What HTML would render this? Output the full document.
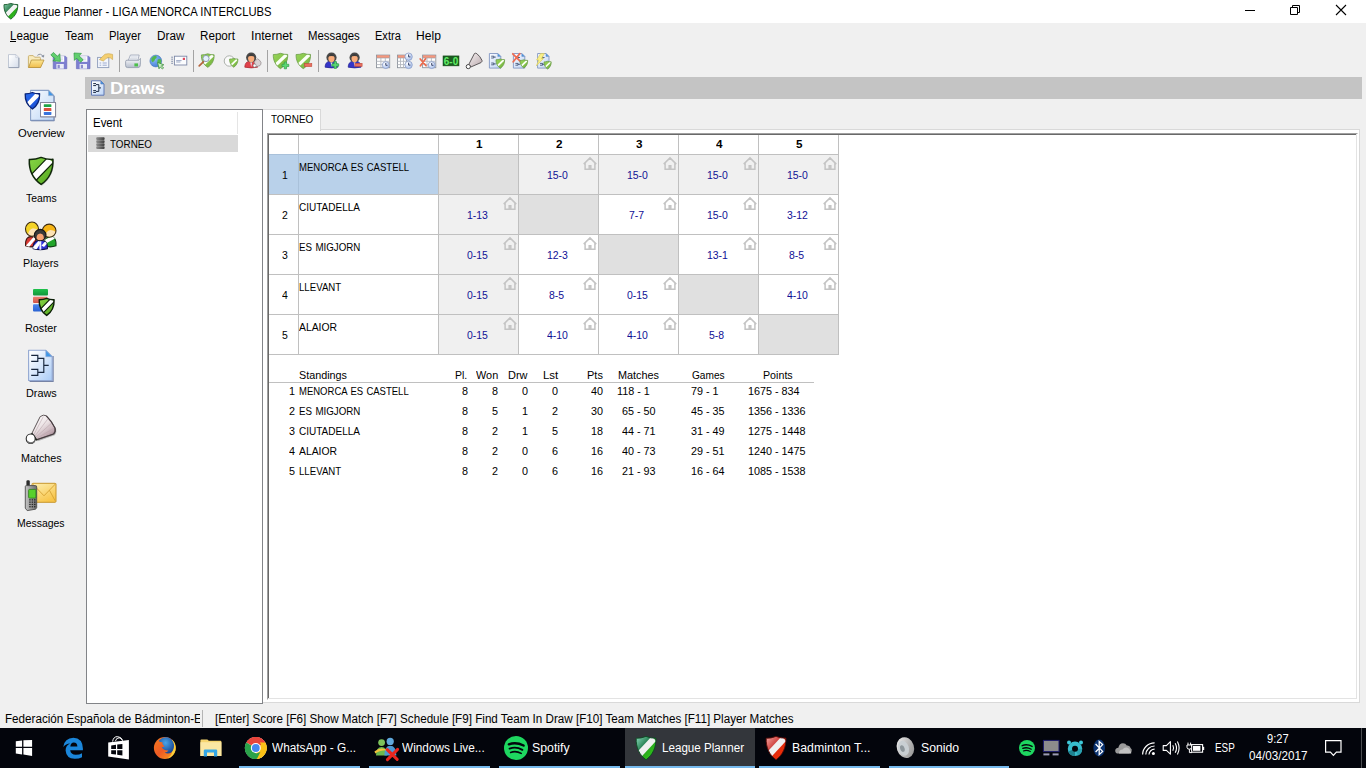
<!DOCTYPE html><html lang="en"><head><meta charset="utf-8"><title>League Planner - LIGA MENORCA INTERCLUBS</title><style>
html,body{margin:0;padding:0}
body{width:1366px;height:768px;overflow:hidden;position:relative;background:#f0f0f0;font-family:'Liberation Sans',sans-serif;}
.a{position:absolute}
.g{position:absolute;left:0;top:0;width:0;height:0}
.t{position:absolute;white-space:pre;line-height:1;transform-origin:0 0;display:inline-block;font-size:11px;color:#000}
svg{position:absolute;overflow:visible}
</style></head><body>
<header class="g titlebar">
<div class="a" style="left:0px;top:0px;width:1366px;height:23px;background:#fff;"></div>
<svg style="left:3px;top:3px" width="16" height="16" viewBox="0 0 16 16"><g transform="translate(1.0,0.4) scale(0.5714285714285714,0.5714285714285714)"><defs><clipPath id="g1c"><path d="M0,2.2 Q6,2.4 12,0 Q18,2.4 24,2 C24.5,13 20,22 12,27.5 C4,22 -0.5,13 0,2.2Z"/></clipPath><linearGradient id="g1l" x1="0" y1="0" x2="1" y2="1"><stop offset="0" stop-color="#86cfae"/><stop offset=".42" stop-color="#2a7a4a"/><stop offset=".58" stop-color="#2aa81c"/><stop offset="1" stop-color="#36d41a"/></linearGradient></defs><path d="M0,2.2 Q6,2.4 12,0 Q18,2.4 24,2 C24.5,13 20,22 12,27.5 C4,22 -0.5,13 0,2.2Z" fill="url(#g1l)"/><g clip-path="url(#g1c)"><polygon points="0.00,19.40 18.80,0.00 24.26,5.29 5.46,24.69" fill="#f4f4f4"/></g><path d="M0,2.2 Q6,2.4 12,0 Q18,2.4 24,2 C24.5,13 20,22 12,27.5 C4,22 -0.5,13 0,2.2Z" fill="none" stroke="#1a5a2c" stroke-width="1.58" stroke-linejoin="round"/></g></svg>
<span class="t" style="left:23.1px;top:6.0px;font-size:12px;transform:scaleX(0.9361)">League Planner - LIGA MENORCA INTERCLUBS</span>
<svg style="left:1244px;top:5px" width="12" height="12" viewBox="0 0 12 12"><path d="M1,5.5 H11" stroke="#000" stroke-width="1" fill="none"/></svg>
<svg style="left:1289px;top:4px" width="12" height="12" viewBox="0 0 12 12"><path d="M3.5,3.5 V1.5 H10.5 V8.5 H8.5 M1.5,3.5 H8.5 V10.5 H1.5Z" stroke="#000" stroke-width="1" fill="none"/></svg>
<svg style="left:1335px;top:4px" width="12" height="12" viewBox="0 0 12 12"><path d="M1,1 L11,11 M11,1 L1,11" stroke="#000" stroke-width="1.1" fill="none"/></svg>
</header>
<nav class="g menubar">
<span class="t" style="left:9.7px;top:30.0px;font-size:12px;transform:scaleX(0.9659)">League</span>
<span class="t" style="left:64.5px;top:30.0px;font-size:12px;transform:scaleX(0.9672)">Team</span>
<span class="t" style="left:109.3px;top:30.0px;font-size:12px;transform:scaleX(0.9372)">Player</span>
<span class="t" style="left:156.8px;top:30.0px;font-size:12px;transform:scaleX(0.9809)">Draw</span>
<span class="t" style="left:200.2px;top:30.0px;font-size:12px;transform:scaleX(0.9708)">Report</span>
<span class="t" style="left:250.9px;top:30.0px;font-size:12px;transform:scaleX(1.0191)">Internet</span>
<span class="t" style="left:308.0px;top:30.0px;font-size:12px;transform:scaleX(0.9466)">Messages</span>
<span class="t" style="left:374.8px;top:30.0px;font-size:12px;transform:scaleX(0.9202)">Extra</span>
<span class="t" style="left:416.1px;top:30.0px;font-size:12px;transform:scaleX(1.0078)">Help</span>
<div class="a" style="left:10px;top:41px;width:6px;height:1px;background:#000;"></div>
</nav>
<div class="g toolbar">
<div class="a" style="left:119px;top:50px;width:1px;height:22px;background:#a3a3a3;"></div>
<div class="a" style="left:193px;top:50px;width:1px;height:22px;background:#a3a3a3;"></div>
<div class="a" style="left:267px;top:50px;width:1px;height:22px;background:#a3a3a3;"></div>
<div class="a" style="left:318px;top:50px;width:1px;height:22px;background:#a3a3a3;"></div>
<svg style="left:0px;top:50px" width="560" height="24" viewBox="0 0 560 24"><defs><linearGradient id="g2" x1="0" y1="0" x2="1" y2="1"><stop offset="0.1" stop-color="#ffffff"/><stop offset="1" stop-color="#d3dcea"/></linearGradient></defs><path d="M8.5,4.6 H15.8 L18.8,7.6 V17.5 H8.5Z" fill="url(#g2)" stroke="#b4bccb" stroke-width="0.8" stroke-linejoin="round"/><path d="M15.8,4.6 V7.6 H18.8Z" fill="#f2f5fa" stroke="#b4bccb" stroke-width="0.48" stroke-linejoin="round"/><path d="M8.7,17.6 H18.9 V8" stroke="#8f9aae" stroke-width=".9" fill="none"/><path d="M28.4,17.4 V6.6 Q28.4,5.6 29.4,5.6 H33.2 L34.6,7.2 H39.6 Q40.4,7.2 40.4,8.2 V17.4Z" fill="#f9ebbc" stroke="#c2a45a" stroke-width=".8"/><defs><linearGradient id="fold1" x1="0" y1="0" x2="0" y2="1"><stop offset="0" stop-color="#fbe694"/><stop offset="1" stop-color="#f0bd4c"/></linearGradient></defs><path d="M28.6,17.5 L31.4,10 H44 L40.6,17.5Z" fill="url(#fold1)" stroke="#b8923c" stroke-width=".8"/><path d="M37.4,5.4 Q40.6,2.6 43,6.4" stroke="#8a92a2" stroke-width="1" fill="none"/><path d="M41.4,6.8 L44,7.4 L44.2,4.4Z" fill="#8a92a2"/><path d="M53.2,6.2 H65.4 L66.8,7.6 V18.7 H53.2Z" fill="#7d7fd0" stroke="#6466b8" stroke-width=".6"/><rect x="55.800000000000004" y="6.2" width="8.4" height="5.6" fill="#fff"/><path d="M57.2,8.0 H63.0 M57.2,9.8 H63.0" stroke="#c9c9e6" stroke-width=".8"/><rect x="56.400000000000006" y="14.0" width="7.4" height="4.7" fill="#eceef8"/><rect x="57.6" y="14.8" width="2.2" height="3.4" fill="#8a8ccc"/><path d="M50.8,5 L53.4,2.4 L57.4,6.2 L59.8,3.8 L60.4,11.4 L52.8,10.8 L55.2,8.8Z" fill="#62cf6e" stroke="#2f9a42" stroke-width=".7"/><path d="M76.4,6.2 H88.60000000000001 L90.0,7.6 V18.7 H76.4Z" fill="#7d7fd0" stroke="#6466b8" stroke-width=".6"/><rect x="79.0" y="6.2" width="8.4" height="5.6" fill="#fff"/><path d="M80.4,8.0 H86.2 M80.4,9.8 H86.2" stroke="#c9c9e6" stroke-width=".8"/><rect x="79.60000000000001" y="14.0" width="7.4" height="4.7" fill="#eceef8"/><rect x="80.80000000000001" y="14.8" width="2.2" height="3.4" fill="#8a8ccc"/><path d="M74,3 L81.4,3.4 L79,5.8 L83.2,9.8 L80.6,12.2 L76.6,8.2 L74.4,10.4Z" fill="#62cf6e" stroke="#2f9a42" stroke-width=".7"/><rect x="97.6" y="7.4" width="11.2" height="10.2" fill="#f3f6fc" stroke="#8e9cba" stroke-width=".9"/><path d="M99.6,13 H101.2 M102.6,13 H106.8 M99.6,15.2 H101.2 M102.6,15.2 H106.8" stroke="#9daace" stroke-width="1"/><path d="M99.4,9.6 L105,4.2 Q108.6,3 112.6,4.4 V9.6 L110.2,7.8 Q108,7.2 106,8.6 L103.4,11Z" fill="#f4cf72" stroke="#c9a548" stroke-width=".6"/><defs><linearGradient id="g3" x1="0" y1="0" x2="0" y2="1"><stop offset="0" stop-color="#fdfdfe"/><stop offset="1" stop-color="#b4bccb"/></linearGradient></defs><path d="M128.2,10.6 L130.4,5 H139.2 L137.8,10.6Z" fill="#f4f6fa" stroke="#9aa2b4" stroke-width=".8"/><path d="M130.6,7 H137.6 M130,8.8 H137" stroke="#c4cad6" stroke-width=".7"/><path d="M125.6,11.6 Q125.6,10.2 127,10.2 H139 Q140.4,9 140.4,8.4 V14.6 Q140.4,17.6 138,17.6 H127.6 Q125.6,17.6 125.6,15.6Z" fill="url(#g3)" stroke="#8f98aa" stroke-width=".8"/><rect x="134.4" y="13.4" width="3.6" height="3" fill="#4cc04a"/><defs><radialGradient id="g4" cx=".35" cy=".3" r=".8"><stop offset="0" stop-color="#8ec0f6"/><stop offset="1" stop-color="#3f78d6"/></radialGradient></defs><circle cx="155.8" cy="11" r="5.9" fill="url(#g4)" stroke="#4a78b8" stroke-width=".6"/><path d="M151.2,8.4 Q153,5.6 156.4,5.4 Q157.4,7.6 155.2,9 Q154.6,11.6 152.6,12.2 Q151,10.6 151.2,8.4Z M157.8,9.4 Q160.2,8.4 161.4,10.2 Q161.4,14 158.6,15.6 Q156.6,13.2 157.8,9.4Z" fill="#52b84e"/><path d="M157.6,12.4 L163.8,14.8 L161.4,15.8 L163.6,18 L162.4,19 L160.2,16.8 L159,18.8Z" fill="#c9f2c4" stroke="#3b8c3a" stroke-width=".8"/><rect x="174.4" y="6.2" width="12.4" height="8.8" fill="#fbfcfe" stroke="#7c88a6" stroke-width=".9"/><rect x="182.8" y="7.8" width="2.2" height="2.2" fill="#e0475a"/><path d="M176.2,10.6 H181.6 M176.2,12 H180.4" stroke="#93a0c0" stroke-width=".9"/><path d="M171.2,7.2 H173 M171.2,9.2 H173 M171.2,11.3 H173 M171.2,13.3 H173" stroke="#7c88a6" stroke-width=".9"/><g transform="translate(201.4,3.8) scale(0.53,0.49290000000000006)"><defs><clipPath id="g5c"><path d="M0,2.2 Q6,2.4 12,0 Q18,2.4 24,2 C24.5,13 20,22 12,27.5 C4,22 -0.5,13 0,2.2Z"/></clipPath><linearGradient id="g5l" x1="0" y1="0" x2="1" y2="1"><stop offset="0" stop-color="#98d658"/><stop offset="1" stop-color="#74b23e"/></linearGradient></defs><path d="M0,2.2 Q6,2.4 12,0 Q18,2.4 24,2 C24.5,13 20,22 12,27.5 C4,22 -0.5,13 0,2.2Z" fill="url(#g5l)"/><g clip-path="url(#g5c)"><polygon points="0.86,20.24 19.66,0.84 23.68,4.73 4.88,24.13" fill="#fbfff6"/></g><path d="M0,2.2 Q6,2.4 12,0 Q18,2.4 24,2 C24.5,13 20,22 12,27.5 C4,22 -0.5,13 0,2.2Z" fill="none" stroke="#6a9a48" stroke-width="1.51" stroke-linejoin="round"/></g><path d="M203.6,11.6 L199.2,15.8" stroke="#b5643c" stroke-width="1.7" stroke-linecap="round"/><circle cx="206" cy="8.5" r="3.1" fill="#e4f0fc" stroke="#8e9cb0" stroke-width="1"/><circle cx="229.4" cy="11" r="5.2" fill="#fafafa" stroke="#a4a8a4" stroke-width=".9"/><g transform="translate(229.6,8.4) scale(0.345,0.32084999999999997)"><defs><clipPath id="g6c"><path d="M0,2.2 Q6,2.4 12,0 Q18,2.4 24,2 C24.5,13 20,22 12,27.5 C4,22 -0.5,13 0,2.2Z"/></clipPath><linearGradient id="g6l" x1="0" y1="0" x2="1" y2="1"><stop offset="0" stop-color="#98d658"/><stop offset="1" stop-color="#74b23e"/></linearGradient></defs><path d="M0,2.2 Q6,2.4 12,0 Q18,2.4 24,2 C24.5,13 20,22 12,27.5 C4,22 -0.5,13 0,2.2Z" fill="url(#g6l)"/><g clip-path="url(#g6c)"><polygon points="0.86,20.24 19.66,0.84 23.68,4.73 4.88,24.13" fill="#fbfff6"/></g><path d="M0,2.2 Q6,2.4 12,0 Q18,2.4 24,2 C24.5,13 20,22 12,27.5 C4,22 -0.5,13 0,2.2Z" fill="none" stroke="#6a9a48" stroke-width="2.32" stroke-linejoin="round"/></g><path d="M244.79999999999998,17.2 Q244.79999999999998,12.0 249.2,11.2 H253.2 Q257.59999999999997,12.0 257.59999999999997,17.2 Q251.2,18.6 244.79999999999998,17.2Z" fill="#e0414a" stroke="#a8242c" stroke-width=".7"/><path d="M250.2,11.6 L251.2,17.1 L252.2,11.6Z" fill="#e8e8f4"/><circle cx="251.2" cy="7.5" r="5.1" fill="#4a4a4a"/><ellipse cx="251.2" cy="8.6" rx="3.1" ry="3.7" fill="#f9ad7c"/><path d="M246.79999999999998,7.0 Q251.2,1.0 255.6,7.0 Q251.2,4.800000000000001 246.79999999999998,7.0Z" fill="#3c3c3c"/><path d="M254,12 L257.6,8.8 Q259.6,9.6 261,12.4 Q261.2,14.4 260,15.6 L256,16.8Z" fill="#d9d2d4" stroke="#8e8688" stroke-width=".7"/><circle cx="254.6" cy="15.6" r="1.6" fill="#fff" stroke="#777" stroke-width=".6"/><g transform="translate(273.3,3.3) scale(0.6,0.558)"><defs><clipPath id="g8c"><path d="M0,2.2 Q6,2.4 12,0 Q18,2.4 24,2 C24.5,13 20,22 12,27.5 C4,22 -0.5,13 0,2.2Z"/></clipPath><linearGradient id="g8l" x1="0" y1="0" x2="1" y2="1"><stop offset="0" stop-color="#98d658"/><stop offset="1" stop-color="#74b23e"/></linearGradient></defs><path d="M0,2.2 Q6,2.4 12,0 Q18,2.4 24,2 C24.5,13 20,22 12,27.5 C4,22 -0.5,13 0,2.2Z" fill="url(#g8l)"/><g clip-path="url(#g8c)"><polygon points="0.86,20.24 19.66,0.84 23.68,4.73 4.88,24.13" fill="#fbfff6"/></g><path d="M0,2.2 Q6,2.4 12,0 Q18,2.4 24,2 C24.5,13 20,22 12,27.5 C4,22 -0.5,13 0,2.2Z" fill="none" stroke="#6a9a48" stroke-width="1.33" stroke-linejoin="round"/></g><path d="M284.26666666666665,12 H286.53333333333336 V14.266666666666666 H288.8 V16.53333333333333 H286.53333333333336 V18.8 H284.26666666666665 V16.53333333333333 H282 V14.266666666666666 H284.26666666666665Z" fill="#5bd873" stroke="#2f9e48" stroke-width=".7"/><g transform="translate(296.1,3.3) scale(0.6,0.558)"><defs><clipPath id="g9c"><path d="M0,2.2 Q6,2.4 12,0 Q18,2.4 24,2 C24.5,13 20,22 12,27.5 C4,22 -0.5,13 0,2.2Z"/></clipPath><linearGradient id="g9l" x1="0" y1="0" x2="1" y2="1"><stop offset="0" stop-color="#98d658"/><stop offset="1" stop-color="#74b23e"/></linearGradient></defs><path d="M0,2.2 Q6,2.4 12,0 Q18,2.4 24,2 C24.5,13 20,22 12,27.5 C4,22 -0.5,13 0,2.2Z" fill="url(#g9l)"/><g clip-path="url(#g9c)"><polygon points="0.86,20.24 19.66,0.84 23.68,4.73 4.88,24.13" fill="#fbfff6"/></g><path d="M0,2.2 Q6,2.4 12,0 Q18,2.4 24,2 C24.5,13 20,22 12,27.5 C4,22 -0.5,13 0,2.2Z" fill="none" stroke="#6a9a48" stroke-width="1.33" stroke-linejoin="round"/></g><rect x="304.6" y="13.6" width="7.2" height="2.9" fill="#e8705e" stroke="#c24a3a" stroke-width=".6"/><path d="M325.1,17.2 Q325.1,12.0 329.5,11.2 H333.5 Q337.9,12.0 337.9,17.2 Q331.5,18.6 325.1,17.2Z" fill="#3535c8" stroke="#1d1d8e" stroke-width=".7"/><path d="M330.5,11.6 L331.5,17.1 L332.5,11.6Z" fill="#e8e8f4"/><circle cx="331.5" cy="7.5" r="5.1" fill="#4a4a4a"/><ellipse cx="331.5" cy="8.6" rx="3.1" ry="3.7" fill="#f9ad7c"/><path d="M327.1,7.0 Q331.5,1.0 335.9,7.0 Q331.5,4.800000000000001 327.1,7.0Z" fill="#3c3c3c"/><path d="M334.16666666666663,11.6 H336.43333333333334 V13.866666666666667 H338.7 V16.133333333333333 H336.43333333333334 V18.4 H334.16666666666663 V16.133333333333333 H331.9 V13.866666666666667 H334.16666666666663Z" fill="#5bd873" stroke="#2f9e48" stroke-width=".7"/><path d="M348.20000000000005,17.2 Q348.20000000000005,12.0 352.6,11.2 H356.6 Q361.0,12.0 361.0,17.2 Q354.6,18.6 348.20000000000005,17.2Z" fill="#3535c8" stroke="#1d1d8e" stroke-width=".7"/><path d="M353.6,11.6 L354.6,17.1 L355.6,11.6Z" fill="#e8e8f4"/><circle cx="354.6" cy="7.5" r="5.1" fill="#4a4a4a"/><ellipse cx="354.6" cy="8.6" rx="3.1" ry="3.7" fill="#f9ad7c"/><path d="M350.20000000000005,7.0 Q354.6,1.0 359.0,7.0 Q354.6,4.800000000000001 350.20000000000005,7.0Z" fill="#3c3c3c"/><rect x="354.9" y="13.4" width="7.2" height="2.9" fill="#e8705e" stroke="#c24a3a" stroke-width=".6"/><rect x="376.5" y="5.1" width="13.2" height="12.6" fill="#fff" stroke="#8d939c" stroke-width=".9"/><rect x="376.9" y="5.5" width="12.399999999999999" height="2.4" fill="#f0714e"/><path d="M377.1,6.5 H389.09999999999997" stroke="#f8b49c" stroke-width=".6"/><path d="M380.9,7.8999999999999995 V17.7" stroke="#b4b8c0" stroke-width=".9"/><path d="M385.3,7.8999999999999995 V17.7" stroke="#b4b8c0" stroke-width=".9"/><path d="M376.5,8.0 H389.7" stroke="#b4b8c0" stroke-width=".9"/><path d="M376.5,11.3 H389.7" stroke="#b4b8c0" stroke-width=".9"/><path d="M376.5,14.6 H389.7" stroke="#b4b8c0" stroke-width=".9"/><defs><radialGradient id="g12" cx=".35" cy=".3" r=".8"><stop offset="0" stop-color="#fff"/><stop offset="1" stop-color="#9db7ea"/></radialGradient></defs><circle cx="385.8" cy="15.1" r="3.5" fill="url(#g12)" stroke="#8ea0c8" stroke-width=".8"/><path d="M385.8,13.0 V15.299999999999999 H387.55" stroke="#27345c" stroke-width=".9" fill="none"/><rect x="397.5" y="5.1" width="9" height="12.6" fill="#fff" stroke="#8d939c" stroke-width=".9"/><rect x="397.9" y="5.5" width="8.2" height="2.4" fill="#f0714e"/><path d="M398.1,6.5 H405.9" stroke="#f8b49c" stroke-width=".6"/><path d="M400.5,7.8999999999999995 V17.7" stroke="#b4b8c0" stroke-width=".9"/><path d="M403.5,7.8999999999999995 V17.7" stroke="#b4b8c0" stroke-width=".9"/><path d="M397.5,8.0 H406.5" stroke="#b4b8c0" stroke-width=".9"/><path d="M397.5,11.3 H406.5" stroke="#b4b8c0" stroke-width=".9"/><path d="M397.5,14.6 H406.5" stroke="#b4b8c0" stroke-width=".9"/><defs><radialGradient id="g13" cx=".35" cy=".3" r=".8"><stop offset="0" stop-color="#fff"/><stop offset="1" stop-color="#9db7ea"/></radialGradient></defs><circle cx="408.6" cy="6.7" r="3.7" fill="url(#g13)" stroke="#8ea0c8" stroke-width=".8"/><path d="M408.6,4.48 V6.9 H410.45000000000005" stroke="#27345c" stroke-width=".9" fill="none"/><defs><radialGradient id="g14" cx=".35" cy=".3" r=".8"><stop offset="0" stop-color="#fff"/><stop offset="1" stop-color="#9db7ea"/></radialGradient></defs><circle cx="408.6" cy="14.9" r="3.7" fill="url(#g14)" stroke="#8ea0c8" stroke-width=".8"/><path d="M408.6,12.68 V15.1 H410.45000000000005" stroke="#27345c" stroke-width=".9" fill="none"/><rect x="422.6" y="5.1" width="13.2" height="12.6" fill="#fff" stroke="#8d939c" stroke-width=".9"/><rect x="423.0" y="5.5" width="12.399999999999999" height="2.4" fill="#f0714e"/><path d="M423.20000000000005,6.5 H435.2" stroke="#f8b49c" stroke-width=".6"/><path d="M427.0,7.8999999999999995 V17.7" stroke="#b4b8c0" stroke-width=".9"/><path d="M431.40000000000003,7.8999999999999995 V17.7" stroke="#b4b8c0" stroke-width=".9"/><path d="M422.6,8.0 H435.8" stroke="#b4b8c0" stroke-width=".9"/><path d="M422.6,11.3 H435.8" stroke="#b4b8c0" stroke-width=".9"/><path d="M422.6,14.6 H435.8" stroke="#b4b8c0" stroke-width=".9"/><defs><radialGradient id="g15" cx=".35" cy=".3" r=".8"><stop offset="0" stop-color="#fff"/><stop offset="1" stop-color="#9db7ea"/></radialGradient></defs><circle cx="431.7" cy="15.1" r="3.5" fill="url(#g15)" stroke="#8ea0c8" stroke-width=".8"/><path d="M431.7,13.0 V15.299999999999999 H433.45" stroke="#27345c" stroke-width=".9" fill="none"/><path d="M420.2,9 L426,15.6 M425.6,8.8 L420.4,15.8" stroke="#ec6a4c" stroke-width="1.7" stroke-linecap="round"/><rect x="443" y="5.9" width="16" height="10" fill="#1c5c20" stroke="#174a1a" stroke-width=".5"/><text x="451" y="14.6" text-anchor="middle" font-family="'Liberation Sans',sans-serif" font-weight="700" font-size="10.5" textLength="14.4" lengthAdjust="spacingAndGlyphs" fill="#63ee68">6-0</text><defs><linearGradient id="g16" x1="0" y1="0" x2="1" y2="1"><stop offset="0" stop-color="#f6f2f2"/><stop offset="1" stop-color="#b9a8ac"/></linearGradient></defs><path d="M468.8,14.4 L474.4,3.6 Q475.6,2.8 476.8,3.6 Q480.4,6.6 482,10.4 Q482.2,12 481,12.6 L470.8,17Z" fill="url(#g16)" stroke="#4e4a4c" stroke-width=".9"/><circle cx="468.3" cy="16.6" r="2.1" fill="#fff" stroke="#333" stroke-width=".9"/><defs><linearGradient id="g17" x1="0" y1="0" x2="1" y2="1"><stop offset="0.1" stop-color="#f7faff"/><stop offset="1" stop-color="#b9d0f4"/></linearGradient></defs><path d="M489.4,3.5 H497.79999999999995 L500.79999999999995,6.5 V18.1 H489.4Z" fill="url(#g17)" stroke="#8196c2" stroke-width="0.9" stroke-linejoin="round"/><path d="M497.79999999999995,3.5 V6.5 H500.79999999999995Z" fill="#3f97e6" stroke="#8196c2" stroke-width="0.54" stroke-linejoin="round"/><path d="M491.2,6.2 H493.8 V8.0 H491.2 M493.8,7.1000000000000005 H495.8 M491.2,13.0 H493.8 V14.8 H491.2 M493.8,13.9 H495.8" stroke="#34466a" stroke-width=".8" fill="none"/><g transform="translate(496,9) scale(0.36,0.3348)"><defs><clipPath id="g18c"><path d="M0,2.2 Q6,2.4 12,0 Q18,2.4 24,2 C24.5,13 20,22 12,27.5 C4,22 -0.5,13 0,2.2Z"/></clipPath><linearGradient id="g18l" x1="0" y1="0" x2="1" y2="1"><stop offset="0" stop-color="#98d658"/><stop offset="1" stop-color="#74b23e"/></linearGradient></defs><path d="M0,2.2 Q6,2.4 12,0 Q18,2.4 24,2 C24.5,13 20,22 12,27.5 C4,22 -0.5,13 0,2.2Z" fill="url(#g18l)"/><g clip-path="url(#g18c)"><polygon points="0.86,20.24 19.66,0.84 23.68,4.73 4.88,24.13" fill="#fbfff6"/></g><path d="M0,2.2 Q6,2.4 12,0 Q18,2.4 24,2 C24.5,13 20,22 12,27.5 C4,22 -0.5,13 0,2.2Z" fill="none" stroke="#6a9a48" stroke-width="2.22" stroke-linejoin="round"/></g><defs><linearGradient id="g19" x1="0" y1="0" x2="1" y2="1"><stop offset="0.1" stop-color="#f7faff"/><stop offset="1" stop-color="#b9d0f4"/></linearGradient></defs><path d="M513.4,3.5 H521.8 L524.8,6.5 V18.1 H513.4Z" fill="url(#g19)" stroke="#8196c2" stroke-width="0.9" stroke-linejoin="round"/><path d="M521.8,3.5 V6.5 H524.8Z" fill="#3f97e6" stroke="#8196c2" stroke-width="0.54" stroke-linejoin="round"/><path d="M515.4,6.6 H518.0 V8.4 H515.4 M518.0,7.5 H520.0 M515.4,13.399999999999999 H518.0 V15.2 H515.4 M518.0,14.3 H520.0" stroke="#34466a" stroke-width=".8" fill="none"/><path d="M512.8,3.8 L520.6,11.6 M519.8,3.6 L513.2,11.8" stroke="#ee6c52" stroke-width="1.8" stroke-linecap="round"/><g transform="translate(520,9.8) scale(0.32,0.29760000000000003)"><defs><clipPath id="g20c"><path d="M0,2.2 Q6,2.4 12,0 Q18,2.4 24,2 C24.5,13 20,22 12,27.5 C4,22 -0.5,13 0,2.2Z"/></clipPath><linearGradient id="g20l" x1="0" y1="0" x2="1" y2="1"><stop offset="0" stop-color="#98d658"/><stop offset="1" stop-color="#74b23e"/></linearGradient></defs><path d="M0,2.2 Q6,2.4 12,0 Q18,2.4 24,2 C24.5,13 20,22 12,27.5 C4,22 -0.5,13 0,2.2Z" fill="url(#g20l)"/><g clip-path="url(#g20c)"><polygon points="0.86,20.24 19.66,0.84 23.68,4.73 4.88,24.13" fill="#fbfff6"/></g><path d="M0,2.2 Q6,2.4 12,0 Q18,2.4 24,2 C24.5,13 20,22 12,27.5 C4,22 -0.5,13 0,2.2Z" fill="none" stroke="#6a9a48" stroke-width="2.50" stroke-linejoin="round"/></g><defs><linearGradient id="g21" x1="0" y1="0" x2="1" y2="1"><stop offset="0.1" stop-color="#f7faff"/><stop offset="1" stop-color="#b9d0f4"/></linearGradient></defs><path d="M537.6,3.5 H546.0 L549.0,6.5 V18.1 H537.6Z" fill="url(#g21)" stroke="#8196c2" stroke-width="0.9" stroke-linejoin="round"/><path d="M546.0,3.5 V6.5 H549.0Z" fill="#3f97e6" stroke="#8196c2" stroke-width="0.54" stroke-linejoin="round"/><path d="M540,6.6 H542.6 V8.4 H540 M542.6,7.5 H544.6 M540,13.399999999999999 H542.6 V15.2 H540 M542.6,14.3 H544.6" stroke="#34466a" stroke-width=".8" fill="none"/><path d="M540.6,3.6 H544.4 L541.6,8.4 H543.6 L536.4,15.8 L538.8,10 H536.6Z" fill="#f8f08a" stroke="#d8c850" stroke-width=".6"/><g transform="translate(544,11.3) scale(0.3,0.279)"><defs><clipPath id="g22c"><path d="M0,2.2 Q6,2.4 12,0 Q18,2.4 24,2 C24.5,13 20,22 12,27.5 C4,22 -0.5,13 0,2.2Z"/></clipPath><linearGradient id="g22l" x1="0" y1="0" x2="1" y2="1"><stop offset="0" stop-color="#98d658"/><stop offset="1" stop-color="#74b23e"/></linearGradient></defs><path d="M0,2.2 Q6,2.4 12,0 Q18,2.4 24,2 C24.5,13 20,22 12,27.5 C4,22 -0.5,13 0,2.2Z" fill="url(#g22l)"/><g clip-path="url(#g22c)"><polygon points="0.86,20.24 19.66,0.84 23.68,4.73 4.88,24.13" fill="#fbfff6"/></g><path d="M0,2.2 Q6,2.4 12,0 Q18,2.4 24,2 C24.5,13 20,22 12,27.5 C4,22 -0.5,13 0,2.2Z" fill="none" stroke="#6a9a48" stroke-width="2.67" stroke-linejoin="round"/></g></svg>
</div>
<aside class="g sidebar">
<svg style="left:20px;top:85px" width="42" height="42" viewBox="0 0 42 42"><defs><linearGradient id="g23" x1="0" y1="0" x2="1" y2="1"><stop offset="0.1" stop-color="#f4f8fe"/><stop offset="1" stop-color="#bcd6f6"/></linearGradient></defs><path d="M10.6,5.4 H28.599999999999998 L33.8,10.600000000000001 V35.4 H10.6Z" fill="url(#g23)" stroke="#8aa0c6" stroke-width="1.1" stroke-linejoin="round"/><path d="M28.599999999999998,5.4 V10.600000000000001 H33.8Z" fill="#3f97e6" stroke="#8aa0c6" stroke-width="0.66" stroke-linejoin="round"/><path d="M11.2,35.9 H34.3 V11" stroke="#6d7fa6" stroke-width="1" fill="none" opacity=".7"/><rect x="21" y="18" width="15.2" height="14.6" fill="#9a9aa8" opacity=".55"/><rect x="20.5" y="17.5" width="15" height="14.3" fill="#fff" stroke="#85879a" stroke-width="1"/><rect x="23.8" y="19.2" width="7.6" height="2.9" rx=".6" fill="#1fa548"/><rect x="23.8" y="23.1" width="7.6" height="2.9" rx=".6" fill="#d8533c"/><rect x="23.8" y="27" width="7.6" height="2.9" rx=".6" fill="#3a74dc"/><g transform="translate(5.2,7.5) scale(0.6,0.6)"><defs><clipPath id="g24c"><path d="M0,2.2 Q6,2.4 12,0 Q18,2.4 24,2 C24.5,13 20,22 12,27.5 C4,22 -0.5,13 0,2.2Z"/></clipPath><linearGradient id="g24l" x1="0" y1="0" x2="1" y2="1"><stop offset="0" stop-color="#2b6df0"/><stop offset="1" stop-color="#164bd0"/></linearGradient></defs><path d="M0,2.2 Q6,2.4 12,0 Q18,2.4 24,2 C24.5,13 20,22 12,27.5 C4,22 -0.5,13 0,2.2Z" fill="url(#g24l)"/><g clip-path="url(#g24c)"><polygon points="0.00,19.40 18.80,0.00 24.26,5.29 5.46,24.69" fill="#fff"/></g><path d="M0,2.2 Q6,2.4 12,0 Q18,2.4 24,2 C24.5,13 20,22 12,27.5 C4,22 -0.5,13 0,2.2Z" fill="none" stroke="#0a2476" stroke-width="2.17" stroke-linejoin="round"/></g></svg>
<svg style="left:20px;top:150px" width="42" height="42" viewBox="0 0 42 42"><path d="M10.3,10.6 Q16,10.8 22,8.4 Q28,10.8 33.8,10.3 C34.5,21 30,30 22,35.7 C14,30 9.5,21 10.3,10.6Z" fill="#000" opacity=".18"/><g transform="translate(9.3,7.4) scale(0.985,0.985)"><defs><clipPath id="g25c"><path d="M0,2.2 Q6,2.4 12,0 Q18,2.4 24,2 C24.5,13 20,22 12,27.5 C4,22 -0.5,13 0,2.2Z"/></clipPath><linearGradient id="g25l" x1="0" y1="0" x2="1" y2="1"><stop offset="0" stop-color="#86d545"/><stop offset="1" stop-color="#55a81f"/></linearGradient></defs><path d="M0,2.2 Q6,2.4 12,0 Q18,2.4 24,2 C24.5,13 20,22 12,27.5 C4,22 -0.5,13 0,2.2Z" fill="url(#g25l)"/><g clip-path="url(#g25c)"><polygon points="0.00,19.40 18.80,0.00 24.26,5.29 5.46,24.69" fill="#fff"/><path d="M0.00,19.40 L18.80,0.00 M24.26,5.29 L5.46,24.69" stroke="#10280a" stroke-width="1.22" fill="none"/></g><path d="M0,2.2 Q6,2.4 12,0 Q18,2.4 24,2 C24.5,13 20,22 12,27.5 C4,22 -0.5,13 0,2.2Z" fill="none" stroke="#10280a" stroke-width="1.52" stroke-linejoin="round"/></g></svg>
<svg style="left:20px;top:215px" width="42" height="42" viewBox="0 0 42 42"><defs><clipPath id="g26"><path d="M5.6,30.8 C5.1,23.6 7.779999999999999,21.6 11.05,21.6 C14.32,21.6 17.0,23.6 16.5,30.8 Q11.05,33.0 5.6,30.8Z"/></clipPath></defs><path d="M5.6,30.8 C5.1,23.6 7.779999999999999,21.6 11.05,21.6 C14.32,21.6 17.0,23.6 16.5,30.8 Q11.05,33.0 5.6,30.8Z" fill="#d83a34" stroke="#3a1410" stroke-width="1.1"/><g clip-path="url(#g26)"><polygon points="6,30.5 13.6,22 15.6,24 8.6,32.6" fill="#fff"/></g><defs><clipPath id="g27"><path d="M24.5,30.8 C24.0,23.6 26.8,21.6 30.25,21.6 C33.7,21.6 36.5,23.6 36,30.8 Q30.25,33.0 24.5,30.8Z"/></clipPath></defs><path d="M24.5,30.8 C24.0,23.6 26.8,21.6 30.25,21.6 C33.7,21.6 36.5,23.6 36,30.8 Q30.25,33.0 24.5,30.8Z" fill="#22a52a" stroke="#0c3a10" stroke-width="1.1"/><g clip-path="url(#g27)"><polygon points="25,24.5 33,21 35,23.5 26,28.5" fill="#fff"/></g><defs><clipPath id="g29"><ellipse cx="12" cy="14.1" rx="6.5" ry="7.1"/></clipPath></defs><ellipse cx="12" cy="14.1" rx="6.5" ry="7.1" fill="#fce2b4"/><g clip-path="url(#g29)"><path d="M4.5,6.0 H19.5 V16.585 Q16.875,13.39 12.975,13.248 Q9.075,14.241999999999999 7.97,19.424999999999997 H4.5Z" fill="#f4d326"/></g><ellipse cx="12" cy="14.1" rx="6.5" ry="7.1" fill="none" stroke="#3d2c12" stroke-width="1.1"/><defs><clipPath id="g30"><ellipse cx="29.2" cy="15.7" rx="6.8" ry="6.6"/></clipPath></defs><ellipse cx="29.2" cy="15.7" rx="6.8" ry="6.6" fill="#fce2b4"/><g clip-path="url(#g30)"><path d="M21.4,8.1 H37.0 V18.009999999999998 Q34.3,15.04 30.22,14.908 Q26.14,15.831999999999999 24.983999999999998,20.65 H21.4Z" fill="#f6b414"/></g><ellipse cx="29.2" cy="15.7" rx="6.8" ry="6.6" fill="none" stroke="#3d2c12" stroke-width="1.1"/><defs><clipPath id="g28"><path d="M13.2,33.6 C12.7,27.2 16.04,25.2 20.299999999999997,25.2 C24.56,25.2 27.9,27.2 27.4,33.6 Q20.299999999999997,35.800000000000004 13.2,33.6Z"/></clipPath></defs><path d="M13.2,33.6 C12.7,27.2 16.04,25.2 20.299999999999997,25.2 C24.56,25.2 27.9,27.2 27.4,33.6 Q20.299999999999997,35.800000000000004 13.2,33.6Z" fill="#2f35d8" stroke="#10124a" stroke-width="1.1"/><g clip-path="url(#g28)"><polygon points="12,33 18.5,26 21,27.5 15.5,36" fill="#fff"/><polygon points="19.4,25 21.3,25 21.3,36 19.4,36" fill="#e8ecff"/><polygon points="21.5,30.5 26,25.6 28,27.5 24,32" fill="#fff"/></g><defs><clipPath id="g31"><ellipse cx="20.2" cy="20.1" rx="5.8" ry="5.7"/></clipPath></defs><ellipse cx="20.2" cy="20.1" rx="5.8" ry="5.7" fill="#f7a171"/><g clip-path="url(#g31)"><path d="M13.399999999999999,13.400000000000002 H27.0 V24.375 H23.796 Q24.259999999999998,18.675 20.2,18.39 Q16.14,18.675 16.604,24.375 H13.399999999999999Z" fill="#3a3a3a"/></g><ellipse cx="20.2" cy="20.1" rx="5.8" ry="5.7" fill="none" stroke="#161616" stroke-width="1.1"/></svg>
<svg style="left:20px;top:280px" width="42" height="42" viewBox="0 0 42 42"><defs><linearGradient id="g32" x1="0" y1="0" x2="0" y2="1"><stop offset="0" stop-color="#1fc24c"/><stop offset="1" stop-color="#12963a"/></linearGradient></defs><rect x="13" y="9" width="15" height="6.4" rx="1" fill="url(#g32)"/><defs><linearGradient id="g33" x1="0" y1="0" x2="0" y2="1"><stop offset="0" stop-color="#ec7f70"/><stop offset="1" stop-color="#cf5446"/></linearGradient></defs><rect x="13" y="16.7" width="14.6" height="6.4" rx="1" fill="url(#g33)"/><defs><linearGradient id="g34" x1="0" y1="0" x2="0" y2="1"><stop offset="0" stop-color="#4a86ee"/><stop offset="1" stop-color="#2a62d2"/></linearGradient></defs><rect x="13" y="24.3" width="10.5" height="7.2" rx="1" fill="url(#g34)"/><path d="M20.2,20 Q23.5,20.2 27,18.8 Q30.5,20.2 34.5,19.9 C35,26 32,32 27.6,36 C22,32 19.5,26 20.2,20Z" fill="#000" opacity=".2"/><g transform="translate(19.2,18.4) scale(0.62,0.62)"><defs><clipPath id="g35c"><path d="M0,2.2 Q6,2.4 12,0 Q18,2.4 24,2 C24.5,13 20,22 12,27.5 C4,22 -0.5,13 0,2.2Z"/></clipPath><linearGradient id="g35l" x1="0" y1="0" x2="1" y2="1"><stop offset="0" stop-color="#86d545"/><stop offset="1" stop-color="#55a81f"/></linearGradient></defs><path d="M0,2.2 Q6,2.4 12,0 Q18,2.4 24,2 C24.5,13 20,22 12,27.5 C4,22 -0.5,13 0,2.2Z" fill="url(#g35l)"/><g clip-path="url(#g35c)"><polygon points="0.00,19.40 18.80,0.00 24.26,5.29 5.46,24.69" fill="#fff"/><path d="M0.00,19.40 L18.80,0.00 M24.26,5.29 L5.46,24.69" stroke="#0c1f08" stroke-width="1.81" fill="none"/></g><path d="M0,2.2 Q6,2.4 12,0 Q18,2.4 24,2 C24.5,13 20,22 12,27.5 C4,22 -0.5,13 0,2.2Z" fill="none" stroke="#0c1f08" stroke-width="2.26" stroke-linejoin="round"/></g></svg>
<svg style="left:20px;top:345px" width="42" height="42" viewBox="0 0 42 42"><path d="M9.6,36.2 H33 V11" stroke="#4e5f8c" stroke-width="1.4" fill="none" opacity=".75"/><defs><linearGradient id="g36" x1="0" y1="0" x2="1" y2="1"><stop offset="0.1" stop-color="#fdfeff"/><stop offset="1" stop-color="#a9cbf6"/></linearGradient></defs><path d="M8.6,5.3 H25.800000000000004 L32.2,11.7 V35.5 H8.6Z" fill="url(#g36)" stroke="#93a8d2" stroke-width="1.1" stroke-linejoin="round"/><path d="M25.800000000000004,5.3 V11.7 H32.2Z" fill="#3f97e6" stroke="#93a8d2" stroke-width="0.66" stroke-linejoin="round"/><path d="M11.2,10.4 H17.8 V16.4 H11.2 M17.8,13.4 H23.8 V27.3 H17.8 M23.8,20.3 H28.7 M11.2,24.3 H17.8 V30.3 H11.2" stroke="#18273d" stroke-width="1.15" fill="none"/></svg>
<svg style="left:20px;top:410px" width="42" height="42" viewBox="0 0 42 42"><defs><linearGradient id="g37" x1="0.2" y1="0" x2="0.9" y2="1"><stop offset="0" stop-color="#ffffff"/><stop offset="0.4" stop-color="#ece3e5"/><stop offset="0.72" stop-color="#c5aeb6"/><stop offset="1" stop-color="#8c727d"/></linearGradient></defs><path d="M12.6,24.4 L20.6,6.8 Q23.8,4.2 26.6,6 Q32,11.5 35.2,18.4 Q36.2,22.2 33.8,24.4 L17,30.4Z" fill="#000" opacity=".25" transform="translate(.8,.9)"/><path d="M11.8,23.5 L20.2,6.6 Q23.4,4.2 26.2,5.7 Q31.6,11 35,18 Q36,21.8 33.6,24 L16.4,29.8Z" fill="url(#g37)" stroke="#5e5658" stroke-width="1"/><path d="M13.6,25 L23.4,6.5 M14.6,26.4 L27.8,9 M15.4,27.6 L31.6,13.2 M16,28.8 L34,18.2" stroke="#b8a3aa" stroke-width=".8" fill="none" opacity=".7"/><path d="M26.2,5.7 Q31.6,11 35,18 Q36,21.8 33.6,24 L16.4,29.8" stroke="#3c3236" stroke-width="1.3" fill="none" opacity=".75"/><path d="M11.6,23.2 L16.8,30.2" stroke="#1c241c" stroke-width="1.6"/><ellipse cx="10.7" cy="28.7" rx="4.5" ry="4.7" fill="#fff" stroke="#2a2a2a" stroke-width="1.1"/><path d="M6.8,31 Q10.5,35 14.6,31.2" stroke="#6e6e6e" stroke-width="1.5" fill="none"/></svg>
<svg style="left:20px;top:475px" width="42" height="42" viewBox="0 0 42 42"><defs><linearGradient id="g38" x1="0" y1="0" x2="0.6" y2="1"><stop offset="0" stop-color="#fdf0b4"/><stop offset="1" stop-color="#f8c54a"/></linearGradient><linearGradient id="g39" x1="0" y1="0" x2="1" y2="0"><stop offset="0" stop-color="#c4c4c4"/><stop offset="1" stop-color="#6e6e6e"/></linearGradient></defs><rect x="12" y="8.3" width="24" height="19" rx="1" fill="url(#g38)" stroke="#c7962c" stroke-width="1"/><path d="M12.4,8.8 L24,20.8 L35.6,8.8 M29.4,15.2 L35.6,26.6" stroke="#d9a638" stroke-width="1" fill="none"/><rect x="6.4" y="5.2" width="3.4" height="6" rx="1.2" fill="#2c2c2c"/><path d="M5.3,11.5 Q5.3,10.6 6.4,10.6 H15.4 Q16.7,10.6 16.7,12 V32.5 L15.6,34.2 L7.2,35.6 L5.3,33.2Z" fill="url(#g39)" stroke="#4c4c4c" stroke-width=".9"/><rect x="8.6" y="14.4" width="7.3" height="8.7" rx="1" fill="#58d02c" stroke="#2f7f1a" stroke-width=".8"/><rect x="9.2" y="24.2" width="1.5" height="1.3" fill="#2a2a2a"/><rect x="11.6" y="24.2" width="1.5" height="1.3" fill="#2a2a2a"/><rect x="14.0" y="24.2" width="1.5" height="1.3" fill="#2a2a2a"/><rect x="9.2" y="26.5" width="1.5" height="1.3" fill="#2a2a2a"/><rect x="11.6" y="26.5" width="1.5" height="1.3" fill="#2a2a2a"/><rect x="14.0" y="26.5" width="1.5" height="1.3" fill="#2a2a2a"/><rect x="9.2" y="28.799999999999997" width="1.5" height="1.3" fill="#2a2a2a"/><rect x="11.6" y="28.799999999999997" width="1.5" height="1.3" fill="#2a2a2a"/><rect x="14.0" y="28.799999999999997" width="1.5" height="1.3" fill="#2a2a2a"/><rect x="9.2" y="31.099999999999998" width="1.5" height="1.3" fill="#2a2a2a"/><rect x="11.6" y="31.099999999999998" width="1.5" height="1.3" fill="#2a2a2a"/><rect x="14.0" y="31.099999999999998" width="1.5" height="1.3" fill="#2a2a2a"/></svg>
<span class="t" style="left:18.1px;top:127.5px;font-size:11px;transform:scaleX(1.0185)">Overview</span>
<span class="t" style="left:25.7px;top:192.5px;font-size:11px;transform:scaleX(0.9440)">Teams</span>
<span class="t" style="left:23.0px;top:257.5px;font-size:11px;transform:scaleX(0.9728)">Players</span>
<span class="t" style="left:25.1px;top:322.5px;font-size:11px;transform:scaleX(0.9841)">Roster</span>
<span class="t" style="left:26.3px;top:387.5px;font-size:11px;transform:scaleX(0.9845)">Draws</span>
<span class="t" style="left:21.1px;top:452.5px;font-size:11px;transform:scaleX(0.9762)">Matches</span>
<span class="t" style="left:16.9px;top:517.5px;font-size:11px;transform:scaleX(0.9491)">Messages</span>
</aside>
<main class="g content">
<div class="g pagehead">
<div class="a" style="left:85px;top:77px;width:1277px;height:22px;background:#c4c4c4;"></div>
<svg style="left:90px;top:80px" width="16" height="16" viewBox="0 0 16 16"><defs><linearGradient id="g40" x1="0" y1="0" x2="1" y2="1"><stop offset="0.1" stop-color="#ffffff"/><stop offset="1" stop-color="#b9d3f7"/></linearGradient></defs><path d="M1.5,0.8 H10.8 L14.0,4.0 V15.200000000000001 H1.5Z" fill="url(#g40)" stroke="#5f78b4" stroke-width="1" stroke-linejoin="round"/><path d="M10.8,0.8 V4.0 H14.0Z" fill="#3f97e6" stroke="#5f78b4" stroke-width="0.6" stroke-linejoin="round"/><path d="M3.2,3.6 H6 M3.2,5.6 H6 M6,4.6 H8.8 V11.4 H6 M3.2,10.6 H6 M3.2,12.4 H6 M8.8,7.9 H11" stroke="#1d2b45" stroke-width="1" fill="none"/></svg>
<span class="t" style="left:110.0px;top:80.5px;font-size:16px;font-weight:700;color:#fff;transform:scaleX(1.1438)">Draws</span>
</div>
<div class="g eventlist">
<div class="a" style="left:86px;top:109px;width:175px;height:593px;background:#fff;border:1px solid #828488;"></div>
<div class="a" style="left:237px;top:112px;width:1px;height:22px;background:#e5e5e5;"></div>
<div class="a" style="left:88px;top:135px;width:150px;height:17px;background:#d9d9d9;"></div>
<svg style="left:96px;top:137px" width="9" height="12" viewBox="0 0 9 12"><defs><linearGradient id="g41" x1="0" x2="1"><stop offset="0" stop-color="#8e8e8e"/><stop offset="1" stop-color="#3e3e3e"/></linearGradient></defs><rect x="0.2" y="0.2" width="8.4" height="2.7" rx="0.9" fill="url(#g41)"/><rect x="0.2" y="3.2" width="8.4" height="2.7" rx="0.9" fill="url(#g41)"/><rect x="0.2" y="6.2" width="8.4" height="2.7" rx="0.9" fill="url(#g41)"/><rect x="0.2" y="9.2" width="8.4" height="2.7" rx="0.9" fill="url(#g41)"/></svg>
<span class="t" style="left:93.0px;top:117.0px;font-size:12px;transform:scaleX(0.9541)">Event</span>
<span class="t" style="left:109.5px;top:138.5px;font-size:11px;transform:scaleX(0.8961)">TORNEO</span>
</div>
<div class="g tabcontrol">
<div class="a" style="left:263px;top:129px;width:1096px;height:572px;background:#fff;border:1px solid #d9d9d9;border-left:none;"></div>
<div class="a" style="left:263px;top:109px;width:57px;height:21px;background:#fff;border:1px solid #d9d9d9;border-bottom:none;border-left:none;"></div>
<div class="a" style="left:267px;top:133px;width:1089px;height:565px;background:#fff;border:1px solid;border-color:#a0a0a0 #fff #fff #a0a0a0;"></div>
<div class="a" style="left:268px;top:698px;width:1089px;height:1px;background:#e3e3e3;"></div>
<div class="a" style="left:1356px;top:134px;width:1px;height:565px;background:#e3e3e3;"></div>
<div class="a" style="left:268px;top:134px;width:1088px;height:1px;background:#696969;"></div>
<div class="a" style="left:268px;top:134px;width:1px;height:564px;background:#696969;"></div>
<div class="g drawgrid">
<div class="a" style="left:439px;top:155px;width:79px;height:39px;background:#e0e0e0;"></div>
<div class="a" style="left:519px;top:155px;width:79px;height:39px;background:#f0f0f0;"></div>
<div class="a" style="left:599px;top:155px;width:79px;height:39px;background:#f0f0f0;"></div>
<div class="a" style="left:679px;top:155px;width:79px;height:39px;background:#f0f0f0;"></div>
<div class="a" style="left:759px;top:155px;width:79px;height:39px;background:#f0f0f0;"></div>
<div class="a" style="left:439px;top:195px;width:79px;height:39px;background:#f0f0f0;"></div>
<div class="a" style="left:519px;top:195px;width:79px;height:39px;background:#e0e0e0;"></div>
<div class="a" style="left:439px;top:235px;width:79px;height:39px;background:#f0f0f0;"></div>
<div class="a" style="left:599px;top:235px;width:79px;height:39px;background:#e0e0e0;"></div>
<div class="a" style="left:439px;top:275px;width:79px;height:39px;background:#f0f0f0;"></div>
<div class="a" style="left:679px;top:275px;width:79px;height:39px;background:#e0e0e0;"></div>
<div class="a" style="left:439px;top:315px;width:79px;height:39px;background:#f0f0f0;"></div>
<div class="a" style="left:759px;top:315px;width:79px;height:39px;background:#e0e0e0;"></div>
<div class="a" style="left:269px;top:154px;width:169px;height:40px;background:#b9d1ea;"></div>
<div class="a" style="left:269px;top:154px;width:570px;height:1px;background:#c0c0c0;"></div>
<div class="a" style="left:269px;top:194px;width:570px;height:1px;background:#c0c0c0;"></div>
<div class="a" style="left:269px;top:234px;width:570px;height:1px;background:#c0c0c0;"></div>
<div class="a" style="left:269px;top:274px;width:570px;height:1px;background:#c0c0c0;"></div>
<div class="a" style="left:269px;top:314px;width:570px;height:1px;background:#c0c0c0;"></div>
<div class="a" style="left:269px;top:354px;width:570px;height:1px;background:#c0c0c0;"></div>
<div class="a" style="left:298px;top:135px;width:1px;height:220px;background:#c0c0c0;"></div>
<div class="a" style="left:438px;top:135px;width:1px;height:220px;background:#c0c0c0;"></div>
<div class="a" style="left:518px;top:135px;width:1px;height:220px;background:#c0c0c0;"></div>
<div class="a" style="left:598px;top:135px;width:1px;height:220px;background:#c0c0c0;"></div>
<div class="a" style="left:678px;top:135px;width:1px;height:220px;background:#c0c0c0;"></div>
<div class="a" style="left:758px;top:135px;width:1px;height:220px;background:#c0c0c0;"></div>
<div class="a" style="left:838px;top:135px;width:1px;height:220px;background:#c0c0c0;"></div>
<div class="a" style="left:298px;top:155px;width:1px;height:39px;background:#a9c1da;"></div>
<div class="a" style="left:269px;top:154px;width:169px;height:1px;background:#a9c1da;"></div>
<svg style="left:583px;top:157px" width="14" height="13" viewBox="0 0 14 13"><path d="M0.7,7.1 L7,0.9 L13.3,7.1 M2.1,6 V12.3 H11.9 V6 M6.2,12.3 V8.8 H7.8 V12.3" fill="none" stroke="#c4c4c4" stroke-width="1.5"/></svg>
<svg style="left:663px;top:157px" width="14" height="13" viewBox="0 0 14 13"><path d="M0.7,7.1 L7,0.9 L13.3,7.1 M2.1,6 V12.3 H11.9 V6 M6.2,12.3 V8.8 H7.8 V12.3" fill="none" stroke="#c4c4c4" stroke-width="1.5"/></svg>
<svg style="left:743px;top:157px" width="14" height="13" viewBox="0 0 14 13"><path d="M0.7,7.1 L7,0.9 L13.3,7.1 M2.1,6 V12.3 H11.9 V6 M6.2,12.3 V8.8 H7.8 V12.3" fill="none" stroke="#c4c4c4" stroke-width="1.5"/></svg>
<svg style="left:823px;top:157px" width="14" height="13" viewBox="0 0 14 13"><path d="M0.7,7.1 L7,0.9 L13.3,7.1 M2.1,6 V12.3 H11.9 V6 M6.2,12.3 V8.8 H7.8 V12.3" fill="none" stroke="#c4c4c4" stroke-width="1.5"/></svg>
<svg style="left:503px;top:197px" width="14" height="13" viewBox="0 0 14 13"><path d="M0.7,7.1 L7,0.9 L13.3,7.1 M2.1,6 V12.3 H11.9 V6 M6.2,12.3 V8.8 H7.8 V12.3" fill="none" stroke="#c4c4c4" stroke-width="1.5"/></svg>
<svg style="left:663px;top:197px" width="14" height="13" viewBox="0 0 14 13"><path d="M0.7,7.1 L7,0.9 L13.3,7.1 M2.1,6 V12.3 H11.9 V6 M6.2,12.3 V8.8 H7.8 V12.3" fill="none" stroke="#c4c4c4" stroke-width="1.5"/></svg>
<svg style="left:743px;top:197px" width="14" height="13" viewBox="0 0 14 13"><path d="M0.7,7.1 L7,0.9 L13.3,7.1 M2.1,6 V12.3 H11.9 V6 M6.2,12.3 V8.8 H7.8 V12.3" fill="none" stroke="#c4c4c4" stroke-width="1.5"/></svg>
<svg style="left:823px;top:197px" width="14" height="13" viewBox="0 0 14 13"><path d="M0.7,7.1 L7,0.9 L13.3,7.1 M2.1,6 V12.3 H11.9 V6 M6.2,12.3 V8.8 H7.8 V12.3" fill="none" stroke="#c4c4c4" stroke-width="1.5"/></svg>
<svg style="left:503px;top:237px" width="14" height="13" viewBox="0 0 14 13"><path d="M0.7,7.1 L7,0.9 L13.3,7.1 M2.1,6 V12.3 H11.9 V6 M6.2,12.3 V8.8 H7.8 V12.3" fill="none" stroke="#c4c4c4" stroke-width="1.5"/></svg>
<svg style="left:583px;top:237px" width="14" height="13" viewBox="0 0 14 13"><path d="M0.7,7.1 L7,0.9 L13.3,7.1 M2.1,6 V12.3 H11.9 V6 M6.2,12.3 V8.8 H7.8 V12.3" fill="none" stroke="#c4c4c4" stroke-width="1.5"/></svg>
<svg style="left:743px;top:237px" width="14" height="13" viewBox="0 0 14 13"><path d="M0.7,7.1 L7,0.9 L13.3,7.1 M2.1,6 V12.3 H11.9 V6 M6.2,12.3 V8.8 H7.8 V12.3" fill="none" stroke="#c4c4c4" stroke-width="1.5"/></svg>
<svg style="left:823px;top:237px" width="14" height="13" viewBox="0 0 14 13"><path d="M0.7,7.1 L7,0.9 L13.3,7.1 M2.1,6 V12.3 H11.9 V6 M6.2,12.3 V8.8 H7.8 V12.3" fill="none" stroke="#c4c4c4" stroke-width="1.5"/></svg>
<svg style="left:503px;top:277px" width="14" height="13" viewBox="0 0 14 13"><path d="M0.7,7.1 L7,0.9 L13.3,7.1 M2.1,6 V12.3 H11.9 V6 M6.2,12.3 V8.8 H7.8 V12.3" fill="none" stroke="#c4c4c4" stroke-width="1.5"/></svg>
<svg style="left:583px;top:277px" width="14" height="13" viewBox="0 0 14 13"><path d="M0.7,7.1 L7,0.9 L13.3,7.1 M2.1,6 V12.3 H11.9 V6 M6.2,12.3 V8.8 H7.8 V12.3" fill="none" stroke="#c4c4c4" stroke-width="1.5"/></svg>
<svg style="left:663px;top:277px" width="14" height="13" viewBox="0 0 14 13"><path d="M0.7,7.1 L7,0.9 L13.3,7.1 M2.1,6 V12.3 H11.9 V6 M6.2,12.3 V8.8 H7.8 V12.3" fill="none" stroke="#c4c4c4" stroke-width="1.5"/></svg>
<svg style="left:823px;top:277px" width="14" height="13" viewBox="0 0 14 13"><path d="M0.7,7.1 L7,0.9 L13.3,7.1 M2.1,6 V12.3 H11.9 V6 M6.2,12.3 V8.8 H7.8 V12.3" fill="none" stroke="#c4c4c4" stroke-width="1.5"/></svg>
<svg style="left:503px;top:317px" width="14" height="13" viewBox="0 0 14 13"><path d="M0.7,7.1 L7,0.9 L13.3,7.1 M2.1,6 V12.3 H11.9 V6 M6.2,12.3 V8.8 H7.8 V12.3" fill="none" stroke="#c4c4c4" stroke-width="1.5"/></svg>
<svg style="left:583px;top:317px" width="14" height="13" viewBox="0 0 14 13"><path d="M0.7,7.1 L7,0.9 L13.3,7.1 M2.1,6 V12.3 H11.9 V6 M6.2,12.3 V8.8 H7.8 V12.3" fill="none" stroke="#c4c4c4" stroke-width="1.5"/></svg>
<svg style="left:663px;top:317px" width="14" height="13" viewBox="0 0 14 13"><path d="M0.7,7.1 L7,0.9 L13.3,7.1 M2.1,6 V12.3 H11.9 V6 M6.2,12.3 V8.8 H7.8 V12.3" fill="none" stroke="#c4c4c4" stroke-width="1.5"/></svg>
<svg style="left:743px;top:317px" width="14" height="13" viewBox="0 0 14 13"><path d="M0.7,7.1 L7,0.9 L13.3,7.1 M2.1,6 V12.3 H11.9 V6 M6.2,12.3 V8.8 H7.8 V12.3" fill="none" stroke="#c4c4c4" stroke-width="1.5"/></svg>
<span class="t" style="left:270.5px;top:113.5px;font-size:11px;transform:scaleX(0.9004)">TORNEO</span>
<span class="t" style="left:476.0px;top:138.5px;font-size:11px;font-weight:700;transform:scaleX(1.0600)">1</span>
<span class="t" style="left:556.0px;top:138.5px;font-size:11px;font-weight:700;transform:scaleX(1.0600)">2</span>
<span class="t" style="left:636.0px;top:138.5px;font-size:11px;font-weight:700;transform:scaleX(1.0600)">3</span>
<span class="t" style="left:716.0px;top:138.5px;font-size:11px;font-weight:700;transform:scaleX(1.0600)">4</span>
<span class="t" style="left:796.0px;top:138.5px;font-size:11px;font-weight:700;transform:scaleX(1.0600)">5</span>
<span class="t" style="left:281.5px;top:169.5px;font-size:11px;transform:scaleX(0.9500)">1</span>
<span class="t" style="left:299.3px;top:161.5px;font-size:11px;transform:scaleX(0.8682);word-spacing:.8px">MENORCA ES CASTELL</span>
<span class="t" style="left:281.5px;top:209.5px;font-size:11px;transform:scaleX(0.9500)">2</span>
<span class="t" style="left:299.3px;top:201.5px;font-size:11px;transform:scaleX(0.9097);word-spacing:.8px">CIUTADELLA</span>
<span class="t" style="left:281.5px;top:249.5px;font-size:11px;transform:scaleX(0.9500)">3</span>
<span class="t" style="left:299.3px;top:241.5px;font-size:11px;transform:scaleX(0.8865);word-spacing:.8px">ES MIGJORN</span>
<span class="t" style="left:281.5px;top:289.5px;font-size:11px;transform:scaleX(0.9500)">4</span>
<span class="t" style="left:299.3px;top:281.5px;font-size:11px;transform:scaleX(0.8772);word-spacing:.8px">LLEVANT</span>
<span class="t" style="left:281.5px;top:329.5px;font-size:11px;transform:scaleX(0.9500)">5</span>
<span class="t" style="left:299.3px;top:321.5px;font-size:11px;transform:scaleX(0.9438);word-spacing:.8px">ALAIOR</span>
<span class="t" style="left:546.5px;top:169.5px;font-size:11px;color:#101096;transform:scaleX(0.9500)">15-0</span>
<span class="t" style="left:626.5px;top:169.5px;font-size:11px;color:#101096;transform:scaleX(0.9500)">15-0</span>
<span class="t" style="left:706.5px;top:169.5px;font-size:11px;color:#101096;transform:scaleX(0.9500)">15-0</span>
<span class="t" style="left:786.5px;top:169.5px;font-size:11px;color:#101096;transform:scaleX(0.9500)">15-0</span>
<span class="t" style="left:466.5px;top:209.5px;font-size:11px;color:#101096;transform:scaleX(0.9500)">1-13</span>
<span class="t" style="left:629.4px;top:209.5px;font-size:11px;color:#101096;transform:scaleX(0.9500)">7-7</span>
<span class="t" style="left:706.5px;top:209.5px;font-size:11px;color:#101096;transform:scaleX(0.9500)">15-0</span>
<span class="t" style="left:786.5px;top:209.5px;font-size:11px;color:#101096;transform:scaleX(0.9500)">3-12</span>
<span class="t" style="left:466.5px;top:249.5px;font-size:11px;color:#101096;transform:scaleX(0.9500)">0-15</span>
<span class="t" style="left:546.5px;top:249.5px;font-size:11px;color:#101096;transform:scaleX(0.9500)">12-3</span>
<span class="t" style="left:706.5px;top:249.5px;font-size:11px;color:#101096;transform:scaleX(0.9500)">13-1</span>
<span class="t" style="left:789.4px;top:249.5px;font-size:11px;color:#101096;transform:scaleX(0.9500)">8-5</span>
<span class="t" style="left:466.5px;top:289.5px;font-size:11px;color:#101096;transform:scaleX(0.9500)">0-15</span>
<span class="t" style="left:549.4px;top:289.5px;font-size:11px;color:#101096;transform:scaleX(0.9500)">8-5</span>
<span class="t" style="left:626.5px;top:289.5px;font-size:11px;color:#101096;transform:scaleX(0.9500)">0-15</span>
<span class="t" style="left:786.5px;top:289.5px;font-size:11px;color:#101096;transform:scaleX(0.9500)">4-10</span>
<span class="t" style="left:466.5px;top:329.5px;font-size:11px;color:#101096;transform:scaleX(0.9500)">0-15</span>
<span class="t" style="left:546.5px;top:329.5px;font-size:11px;color:#101096;transform:scaleX(0.9500)">4-10</span>
<span class="t" style="left:626.5px;top:329.5px;font-size:11px;color:#101096;transform:scaleX(0.9500)">4-10</span>
<span class="t" style="left:709.4px;top:329.5px;font-size:11px;color:#101096;transform:scaleX(0.9500)">5-8</span>
</div>
<div class="g standings">
<div class="a" style="left:269px;top:382px;width:545px;height:1px;background:#c0c0c0;"></div>
<span class="t" style="left:298.9px;top:369.5px;font-size:11px;transform:scaleX(0.9806)">Standings</span>
<span class="t" style="left:455.1px;top:369.5px;font-size:11px;transform:scaleX(0.9569)">Pl.</span>
<span class="t" style="left:475.5px;top:369.5px;font-size:11px;transform:scaleX(0.9897)">Won</span>
<span class="t" style="left:508.0px;top:369.5px;font-size:11px;transform:scaleX(0.9963)">Drw</span>
<span class="t" style="left:542.7px;top:369.5px;font-size:11px;transform:scaleX(1.0410)">Lst</span>
<span class="t" style="left:586.8px;top:369.5px;font-size:11px;transform:scaleX(0.9990)">Pts</span>
<span class="t" style="left:617.5px;top:369.5px;font-size:11px;transform:scaleX(0.9859)">Matches</span>
<span class="t" style="left:691.9px;top:369.5px;font-size:11px;transform:scaleX(0.9188)">Games</span>
<span class="t" style="left:763.0px;top:369.5px;font-size:11px;transform:scaleX(0.9710)">Points</span>
<span class="t" style="left:289.0px;top:385.5px;font-size:11px;transform:scaleX(0.9800)">1</span>
<span class="t" style="left:299.3px;top:385.5px;font-size:11px;transform:scaleX(0.8642);word-spacing:.8px">MENORCA ES CASTELL</span>
<span class="t" style="left:462.0px;top:385.5px;font-size:11px;transform:scaleX(0.9800)">8</span>
<span class="t" style="left:492.0px;top:385.5px;font-size:11px;transform:scaleX(0.9800)">8</span>
<span class="t" style="left:522.0px;top:385.5px;font-size:11px;transform:scaleX(0.9800)">0</span>
<span class="t" style="left:552.0px;top:385.5px;font-size:11px;transform:scaleX(0.9800)">0</span>
<span class="t" style="left:590.8px;top:385.5px;font-size:11px;transform:scaleX(0.9800)">40</span>
<span class="t" style="left:616.5px;top:385.5px;font-size:11px;transform:scaleX(0.9800)">118 - 1</span>
<span class="t" style="left:690.8px;top:385.5px;font-size:11px;transform:scaleX(0.9800)">79 - 1</span>
<span class="t" style="left:748.2px;top:385.5px;font-size:11px;transform:scaleX(0.9800)">1675 - 834</span>
<span class="t" style="left:289.0px;top:405.5px;font-size:11px;transform:scaleX(0.9800)">2</span>
<span class="t" style="left:299.3px;top:405.5px;font-size:11px;transform:scaleX(0.8865);word-spacing:.8px">ES MIGJORN</span>
<span class="t" style="left:462.0px;top:405.5px;font-size:11px;transform:scaleX(0.9800)">8</span>
<span class="t" style="left:492.0px;top:405.5px;font-size:11px;transform:scaleX(0.9800)">5</span>
<span class="t" style="left:522.0px;top:405.5px;font-size:11px;transform:scaleX(0.9800)">1</span>
<span class="t" style="left:552.0px;top:405.5px;font-size:11px;transform:scaleX(0.9800)">2</span>
<span class="t" style="left:590.8px;top:405.5px;font-size:11px;transform:scaleX(0.9800)">30</span>
<span class="t" style="left:621.6px;top:405.5px;font-size:11px;transform:scaleX(0.9800)">65 - 50</span>
<span class="t" style="left:690.8px;top:405.5px;font-size:11px;transform:scaleX(0.9800)">45 - 35</span>
<span class="t" style="left:748.2px;top:405.5px;font-size:11px;transform:scaleX(0.9800)">1356 - 1336</span>
<span class="t" style="left:289.0px;top:425.5px;font-size:11px;transform:scaleX(0.9800)">3</span>
<span class="t" style="left:299.3px;top:425.5px;font-size:11px;transform:scaleX(0.9097);word-spacing:.8px">CIUTADELLA</span>
<span class="t" style="left:462.0px;top:425.5px;font-size:11px;transform:scaleX(0.9800)">8</span>
<span class="t" style="left:492.0px;top:425.5px;font-size:11px;transform:scaleX(0.9800)">2</span>
<span class="t" style="left:522.0px;top:425.5px;font-size:11px;transform:scaleX(0.9800)">1</span>
<span class="t" style="left:552.0px;top:425.5px;font-size:11px;transform:scaleX(0.9800)">5</span>
<span class="t" style="left:590.8px;top:425.5px;font-size:11px;transform:scaleX(0.9800)">18</span>
<span class="t" style="left:621.6px;top:425.5px;font-size:11px;transform:scaleX(0.9800)">44 - 71</span>
<span class="t" style="left:690.8px;top:425.5px;font-size:11px;transform:scaleX(0.9800)">31 - 49</span>
<span class="t" style="left:748.2px;top:425.5px;font-size:11px;transform:scaleX(0.9800)">1275 - 1448</span>
<span class="t" style="left:289.0px;top:445.5px;font-size:11px;transform:scaleX(0.9800)">4</span>
<span class="t" style="left:299.3px;top:445.5px;font-size:11px;transform:scaleX(0.9438);word-spacing:.8px">ALAIOR</span>
<span class="t" style="left:462.0px;top:445.5px;font-size:11px;transform:scaleX(0.9800)">8</span>
<span class="t" style="left:492.0px;top:445.5px;font-size:11px;transform:scaleX(0.9800)">2</span>
<span class="t" style="left:522.0px;top:445.5px;font-size:11px;transform:scaleX(0.9800)">0</span>
<span class="t" style="left:552.0px;top:445.5px;font-size:11px;transform:scaleX(0.9800)">6</span>
<span class="t" style="left:590.8px;top:445.5px;font-size:11px;transform:scaleX(0.9800)">16</span>
<span class="t" style="left:621.6px;top:445.5px;font-size:11px;transform:scaleX(0.9800)">40 - 73</span>
<span class="t" style="left:690.8px;top:445.5px;font-size:11px;transform:scaleX(0.9800)">29 - 51</span>
<span class="t" style="left:748.2px;top:445.5px;font-size:11px;transform:scaleX(0.9800)">1240 - 1475</span>
<span class="t" style="left:289.0px;top:465.5px;font-size:11px;transform:scaleX(0.9800)">5</span>
<span class="t" style="left:299.3px;top:465.5px;font-size:11px;transform:scaleX(0.8772);word-spacing:.8px">LLEVANT</span>
<span class="t" style="left:462.0px;top:465.5px;font-size:11px;transform:scaleX(0.9800)">8</span>
<span class="t" style="left:492.0px;top:465.5px;font-size:11px;transform:scaleX(0.9800)">2</span>
<span class="t" style="left:522.0px;top:465.5px;font-size:11px;transform:scaleX(0.9800)">0</span>
<span class="t" style="left:552.0px;top:465.5px;font-size:11px;transform:scaleX(0.9800)">6</span>
<span class="t" style="left:590.8px;top:465.5px;font-size:11px;transform:scaleX(0.9800)">16</span>
<span class="t" style="left:621.6px;top:465.5px;font-size:11px;transform:scaleX(0.9800)">21 - 93</span>
<span class="t" style="left:690.8px;top:465.5px;font-size:11px;transform:scaleX(0.9800)">16 - 64</span>
<span class="t" style="left:748.2px;top:465.5px;font-size:11px;transform:scaleX(0.9800)">1085 - 1538</span>
</div>
</div>
</main>
<footer class="g statusbar">
<span class="t" style="left:5.4px;top:712.5px;font-size:12px;transform:scaleX(0.9703)">Federación Española de Bádminton-E</span>
<span class="t" style="left:215.0px;top:712.5px;font-size:12px;transform:scaleX(0.9704)">[Enter] Score [F6] Show Match [F7] Schedule [F9] Find Team In Draw [F10] Team Matches [F11] Player Matches</span>
<div class="a" style="left:200px;top:709px;width:14px;height:18px;background:#f0f0f0;"></div>
<div class="a" style="left:202px;top:710px;width:1px;height:17px;background:#b4b4b4;"></div>
</footer>
<div class="g taskbar">
<div class="a" style="left:0;top:728px;width:1366px;height:40px;background:#03050c"></div>
<div class="a" style="left:625px;top:728px;width:130px;height:40px;background:#33363b"></div>
<div class="a" style="left:239px;top:766px;width:121px;height:2px;background:#76b9ed"></div>
<div class="a" style="left:369px;top:766px;width:121px;height:2px;background:#76b9ed"></div>
<div class="a" style="left:499px;top:766px;width:121px;height:2px;background:#76b9ed"></div>
<div class="a" style="left:625px;top:766px;width:130px;height:2px;background:#76b9ed"></div>
<div class="a" style="left:759px;top:766px;width:121px;height:2px;background:#76b9ed"></div>
<div class="a" style="left:889px;top:766px;width:120px;height:2px;background:#76b9ed"></div>
<div class="a" style="left:1361px;top:728px;width:1px;height:40px;background:#4a4c50"></div>
<svg style="left:0px;top:728px" width="1366" height="40" viewBox="0 0 1366 40"><path d="M15.8,13.3 L22.1,12.4 V18.7 H15.8Z M23.4,12.2 L32.1,11.9 V18.7 H23.4Z M15.8,20 H22.1 V26.4 L15.8,25.5Z M23.4,20 H32.1 V28.1 L23.4,26.6Z" fill="#fff"/><path d="M63.2,19 Q64.6,10 73.4,9.8 Q82.6,10.2 82.9,20.6 V22.2 H70.2 Q70.8,26.6 75.8,26.8 Q79.4,26.8 82,25.2 V29.2 Q78.8,30.9 74.6,30.8 Q66.2,30.2 65.6,22.4 Q65.6,17.6 70,15.4 Q66,15.4 63.2,19Z M70.3,18.4 H77.4 Q77.2,14.6 73.8,14.5 Q70.8,14.8 70.3,18.4Z" fill="#1b86da" fill-rule="evenodd"/><path d="M108.2,14.6 L128.9,11.9 V31.4 L108.2,28.4Z" fill="#fff"/><path d="M112.6,13.6 Q113.4,8.6 117.4,8.6 Q121.4,8.8 122.4,12.4 M115.4,13.2 Q116.2,9.6 119.2,9.8 Q122,10.2 122.6,12.6" stroke="#fff" stroke-width="1" fill="none"/><path d="M111.2,17.4 L116,16.8 V21 H111.2Z M117.2,16.6 L122.4,16 V21 H117.2Z M111.2,22.2 H116 V26.6 L111.2,26Z M117.2,22.2 H122.4 V27.6 L117.2,26.8Z" fill="#03050c"/><defs><linearGradient id="g42" x1="0" y1="0" x2="1" y2="1"><stop offset="0" stop-color="#f47b20"/><stop offset=".5" stop-color="#ee5a24"/><stop offset="1" stop-color="#f9a51c"/></linearGradient><radialGradient id="g43" cx=".45" cy=".35" r=".7"><stop offset="0" stop-color="#48a4e8"/><stop offset="1" stop-color="#153f8e"/></radialGradient></defs><circle cx="164.8" cy="20" r="10.9" fill="url(#g42)"/><path d="M172,11.6 Q176.4,15.6 175.6,22 Q174,28.6 167.6,30.6 Q173,26.6 172.4,20Z" fill="#fbd13a"/><path d="M158.6,13 Q162,8.6 167.4,9.2 Q172.8,10.6 174,16.6 Q174.4,21.6 171.2,24.6 Q167.6,26.4 164.6,24.4 Q167.4,24.2 168.4,22.4 Q163,22.6 161.6,18.8 Q163.4,19.4 164.4,18.6 Q161.6,16.4 162.4,14.2 Q160.4,14.4 158.6,13Z" fill="url(#g43)"/><path d="M200.4,12.4 Q200.4,11.4 201.4,11.4 H207.4 L208.8,12.8 H220.4 Q221.4,12.8 221.4,13.8 V28 H200.4Z" fill="#f6d56f"/><rect x="200.4" y="14.2" width="21" height="13.8" fill="#fbe7a3"/><path d="M203.8,28.4 V22.6 Q203.8,21.4 205,21.4 H216 Q217.2,21.4 217.2,22.6 V28.4 H214 V24.6 H207 V28.4Z" fill="#35a7e6"/><circle cx="255.8" cy="20" r="10.9" fill="#fff"/><path d="M255.8,20 L246.4,14.5 A10.9,10.9 0 0 1 265.2,14.5Z" fill="#e8453c"/><path d="M255.8,20 L265.2,14.5 A10.9,10.9 0 0 1 255.8,30.9Z" fill="#fbc116"/><path d="M255.8,20 L255.8,30.9 A10.9,10.9 0 0 1 246.4,14.5Z" fill="#2aa24a"/><path d="M246.4,14.5 A10.9,10.9 0 0 1 265.2,14.5 H255.8Z" fill="#e8453c"/><path d="M265.2,14.5 A10.9,10.9 0 0 1 257,30.8 L261.6,22.4 Q262.4,18 259.8,14.5Z" fill="#fbc116"/><path d="M257,30.8 A10.9,10.9 0 0 1 246.4,14.5 L251.2,22.8 Q253,25.2 256.4,25.4 L260.4,24Z" fill="#2aa24a"/><circle cx="255.8" cy="20" r="5" fill="#fff"/><circle cx="255.8" cy="20" r="3.9" fill="#4688f1"/><circle cx="381.6" cy="14.6" r="3.4" fill="#7cc25a"/><path d="M376,27.6 Q376,19 381.6,19 Q387,19 387.2,27.6Z" fill="#6cb84e"/><circle cx="390.2" cy="13.4" r="3.6" fill="#5fa8dc"/><path d="M384.4,27.6 Q384.4,17.8 390.2,17.8 Q396.2,17.8 396.4,27.6Z" fill="#4c98d2"/><path d="M374.4,23.4 Q380.6,18.2 388.4,22.4 Q380.6,21.8 375.4,25.4Z" fill="#f0c23c"/><path d="M387.2,21.6 L397.2,31.4 M397.6,21.4 L387.4,31.6" stroke="#e8261e" stroke-width="3" stroke-linecap="round"/><circle cx="516" cy="20" r="12" fill="#1ed760"/><path d="M508.8,16.4 Q516,13.6 523.6,17.6" stroke="#03050c" stroke-width="2.30" fill="none" stroke-linecap="round"/><path d="M509.6,20.6 Q516,18.2 522.4,21.8" stroke="#03050c" stroke-width="1.90" fill="none" stroke-linecap="round"/><path d="M510.6,24.4 Q516,22.4 521.2,25.4" stroke="#03050c" stroke-width="1.60" fill="none" stroke-linecap="round"/><g transform="translate(636.2,8.4) scale(0.82,0.85)"><defs><clipPath id="g44c"><path d="M0,2.2 Q6,2.4 12,0 Q18,2.4 24,2 C24.5,13 20,22 12,27.5 C4,22 -0.5,13 0,2.2Z"/></clipPath><linearGradient id="g44l" x1="0" y1="0" x2="1" y2="1"><stop offset="0" stop-color="#8edcc0"/><stop offset=".42" stop-color="#1f7a4a"/><stop offset=".58" stop-color="#2aa81c"/><stop offset="1" stop-color="#36dc18"/></linearGradient></defs><path d="M0,2.2 Q6,2.4 12,0 Q18,2.4 24,2 C24.5,13 20,22 12,27.5 C4,22 -0.5,13 0,2.2Z" fill="url(#g44l)"/><g clip-path="url(#g44c)"><polygon points="0.00,19.40 18.80,0.00 24.26,5.29 5.46,24.69" fill="#f0f0f0"/></g><path d="M0,2.2 Q6,2.4 12,0 Q18,2.4 24,2 C24.5,13 20,22 12,27.5 C4,22 -0.5,13 0,2.2Z" fill="none" stroke="#0c4a22" stroke-width="1.10" stroke-linejoin="round"/></g><g transform="translate(766.2,8.4) scale(0.82,0.85)"><defs><clipPath id="g45c"><path d="M0,2.2 Q6,2.4 12,0 Q18,2.4 24,2 C24.5,13 20,22 12,27.5 C4,22 -0.5,13 0,2.2Z"/></clipPath><linearGradient id="g45l" x1="0" y1="0" x2="1" y2="1"><stop offset="0" stop-color="#f6aaa6"/><stop offset=".42" stop-color="#cc3a36"/><stop offset=".58" stop-color="#e02a0c"/><stop offset="1" stop-color="#ff3404"/></linearGradient></defs><path d="M0,2.2 Q6,2.4 12,0 Q18,2.4 24,2 C24.5,13 20,22 12,27.5 C4,22 -0.5,13 0,2.2Z" fill="url(#g45l)"/><g clip-path="url(#g45c)"><polygon points="0.00,19.40 18.80,0.00 24.26,5.29 5.46,24.69" fill="#f0f0f0"/></g><path d="M0,2.2 Q6,2.4 12,0 Q18,2.4 24,2 C24.5,13 20,22 12,27.5 C4,22 -0.5,13 0,2.2Z" fill="none" stroke="#5a0c08" stroke-width="1.10" stroke-linejoin="round"/></g><defs><linearGradient id="g46" x1="0" y1="0" x2="1" y2="1"><stop offset="0" stop-color="#f2f2f2"/><stop offset="1" stop-color="#8a8a8a"/></linearGradient></defs><ellipse cx="905.4" cy="19.6" rx="8.6" ry="10.6" fill="url(#g46)" transform="rotate(-18 905.4 19.6)"/><ellipse cx="903.6" cy="20.2" rx="5.2" ry="7.6" fill="#c9cfd3" transform="rotate(-18 903.6 20.2)"/><ellipse cx="902.4" cy="20.6" rx="2.2" ry="3.4" fill="#8e979c" transform="rotate(-18 902.4 20.6)"/><circle cx="1027" cy="20" r="8" fill="#1ed760"/><path d="M1022.2,17.6 Q1027,15.733333333333334 1032.0666666666666,18.4" stroke="#03050c" stroke-width="1.53" fill="none" stroke-linecap="round"/><path d="M1022.7333333333333,20.4 Q1027,18.8 1031.2666666666667,21.2" stroke="#03050c" stroke-width="1.27" fill="none" stroke-linecap="round"/><path d="M1023.4,22.933333333333334 Q1027,21.6 1030.4666666666667,23.6" stroke="#03050c" stroke-width="1.07" fill="none" stroke-linecap="round"/><rect x="1043.4" y="12.4" width="15.6" height="11.2" fill="#8c8c8c" stroke="#1c1c6e" stroke-width="1"/><rect x="1043.4" y="25.4" width="6" height="2" fill="#9c9cb4"/><rect x="1052.6" y="25.4" width="6" height="2" fill="#9c9cb4"/><circle cx="1069" cy="14.4" r="2" fill="#3ec8d8"/><circle cx="1081" cy="14.4" r="2" fill="#3ec8d8"/><circle cx="1075" cy="20.8" r="7.2" fill="#38bccc"/><path d="M1075,20.8 L1075,28 A7.2,7.2 0 0 1 1068.2,23.4Z" fill="#1e8290"/><path d="M1075,20.8 L1082.2,20.8 A7.2,7.2 0 0 1 1078,27.4Z" fill="#2aa0b0"/><circle cx="1075" cy="20.8" r="3" fill="#03050c"/><ellipse cx="1099.2" cy="20" rx="5.8" ry="8.4" fill="#0a3270"/><path d="M1095.6,16 L1102.6,23.4 L1099.2,26.6 V13.4 L1102.6,16.6 L1095.6,24" stroke="#fff" stroke-width="1.3" fill="none"/><path d="M1118.4,25.6 Q1115,25.4 1115.2,22.4 Q1115.6,19.8 1118.4,19.8 Q1119,15.4 1123,15.2 Q1125.6,15.2 1126.8,17.6 Q1129.8,17 1130.6,20 Q1132.4,21 1131.6,23.6 Q1131,25.6 1128.8,25.6Z" fill="#9a9a9a"/><path d="M1119,25.6 Q1119,21.6 1122.6,21.6 Q1124,19 1127,19.6 Q1130,20.4 1130.2,23 Q1131.6,23.8 1131.2,25.6Z" fill="#c2c2c2"/><path d="M1142.6,26.6 A12,12 0 0 1 1154.6,14.8" stroke="#fff" stroke-width="1.2" fill="none"/><path d="M1145.8,26.6 A8.8,8.8 0 0 1 1154.6,18" stroke="#fff" stroke-width="1.2" fill="none"/><path d="M1149,26.6 A5.6,5.6 0 0 1 1154.6,21.2" stroke="#fff" stroke-width="1.2" fill="none"/><circle cx="1153.4" cy="25.6" r="1.5" fill="#fff"/><path d="M1163.2,17.6 H1166.4 L1170.4,13.6 V26.2 L1166.4,22.4 H1163.2Z" stroke="#fff" stroke-width="1.1" fill="none" stroke-linejoin="round"/><path d="M1172.8,17.2 Q1174.4,20 1172.8,22.8 M1175.2,15.2 Q1177.8,20 1175.2,24.8 M1177.4,13.4 Q1180.8,20 1177.4,26.4" stroke="#fff" stroke-width="1.1" fill="none"/><rect x="1191.6" y="16.6" width="11" height="7.6" fill="none" stroke="#fff" stroke-width="1.1"/><rect x="1203" y="18.8" width="1.2" height="3.2" fill="#fff"/><rect x="1193" y="18" width="7.4" height="4.8" fill="#fff"/><path d="M1188,14.6 V17 M1190.6,14.6 V17 M1187,17 H1191.6 V19.4 Q1191.6,21.2 1189.4,21.2 Q1187,21.2 1187,19.4Z M1189.4,21.2 V24.6 H1192" stroke="#fff" stroke-width="1" fill="#03050c"/><path d="M1325.6,12.6 H1341 V24.2 H1336.4 L1333.4,27.4 L1330.4,24.2 H1325.6Z" stroke="#fff" stroke-width="1.2" fill="none"/></svg>
<span class="t" style="left:271.5px;top:741.5px;font-size:12px;color:#fff;transform:scaleX(0.9850)">WhatsApp - G...</span>
<span class="t" style="left:401.5px;top:741.5px;font-size:12px;color:#fff;transform:scaleX(0.9839)">Windows Live...</span>
<span class="t" style="left:531.9px;top:741.5px;font-size:12px;color:#fff;transform:scaleX(1.0271)">Spotify</span>
<span class="t" style="left:661.5px;top:741.5px;font-size:12px;color:#fff;transform:scaleX(0.9685)">League Planner</span>
<span class="t" style="left:791.9px;top:741.5px;font-size:12px;color:#fff;transform:scaleX(1.0259)">Badminton T...</span>
<span class="t" style="left:920.5px;top:741.5px;font-size:12px;color:#fff;transform:scaleX(1.0189)">Sonido</span>
<span class="t" style="left:1214.8px;top:741.5px;font-size:12px;color:#fff;transform:scaleX(0.8236)">ESP</span>
<span class="t" style="left:1267.0px;top:733.0px;font-size:12px;color:#fff;transform:scaleX(0.9238)">9:27</span>
<span class="t" style="left:1248.5px;top:750.0px;font-size:12px;color:#fff;transform:scaleX(0.9737)">04/03/2017</span>
</div>
</body></html>
